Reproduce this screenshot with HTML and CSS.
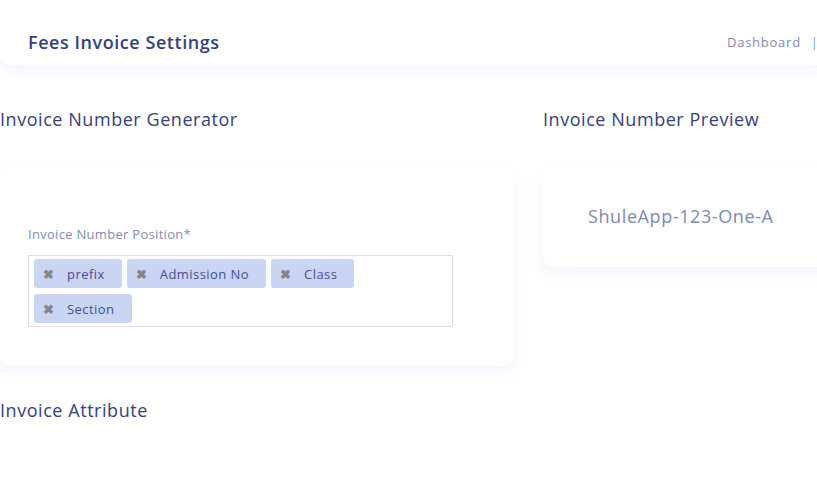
FILE: index.html
```html
<!DOCTYPE html>
<html>
<head>
<meta charset="utf-8">
<link rel="stylesheet" href="styles.css">
</head>
<body>
<header class="topbar">
  <h1 class="page-title">Fees Invoice Settings</h1>
  <nav class="crumbs"><a class="crumb">Dashboard</a><span class="sep">|</span></nav>
</header>
<main class="content">
  <section class="col-left">
    <h2 class="section-title">Invoice Number Generator</h2>
    <div class="card gen-card">
      <label class="field-label">Invoice Number Position*</label>
      <div class="tag-box">
        <span class="tag"><span class="tag-x">&#10006;</span>prefix</span>
        <span class="tag"><span class="tag-x">&#10006;</span>Admission No</span>
        <span class="tag"><span class="tag-x">&#10006;</span>Class</span>
        <span class="tag"><span class="tag-x">&#10006;</span>Section</span>
      </div>
    </div>
    <h2 class="section-title attr-title">Invoice Attribute</h2>
  </section>
  <section class="col-right">
    <h2 class="section-title">Invoice Number Preview</h2>
    <div class="card preview-card">
      <div class="preview-text">ShuleApp-123-One-A</div>
    </div>
  </section>
</main>
</body>
</html>
```
FILE: styles.css
```css
html, body {
  margin: 0;
  padding: 0;
  background: #ffffff;
  overflow: hidden;
  width: 817px;
  height: 494px;
  font-family: "Open Sans", "Noto Sans", sans-serif;
}
.topbar {
  height: 65px;
  background: #fff;
  border-radius: 0 0 10px 10px;
  box-shadow: 0 6px 14px rgba(190, 140, 240, 0.12);
  display: flex;
  align-items: flex-start;
  justify-content: space-between;
  padding: 30px 0 0 28px;
  width: 830px;
  box-sizing: border-box;
}
.page-title {
  margin: 0;
  font-size: 18px;
  line-height: 24px;
  font-weight: 600;
  color: #35417e;
  letter-spacing: 0.55px;
}
.crumbs {
  display: flex;
  align-items: center;
  gap: 10px;
  font-size: 13px;
  line-height: 24px;
  color: #828bb2;
  margin-right: 12px;
  letter-spacing: 0.75px;
}
.sep { color: #7c9be0; letter-spacing: 0; }
.content {
  display: flex;
  gap: 30px;
  margin-top: 40px;
  width: 860px;
}
.col-left { width: 513px; flex: none; }
.col-right { width: 300px; flex: none; }
.section-title {
  margin: 0;
  font-size: 18px;
  font-weight: 500;
  color: #35417e;
  line-height: 28px;
  height: 28px;
  letter-spacing: 0.55px;
}
.card {
  background: #fff;
  border-radius: 10px;
  box-shadow: 0 6px 16px rgba(190, 140, 240, 0.13);
  margin-top: 35px;
}
.gen-card {
  padding: 58px 60px 39px 28px;
  height: 198px;
  box-sizing: border-box;
}
.field-label {
  display: block;
  font-size: 13px;
  color: #828bb2;
  line-height: 16px;
  margin-bottom: 13px;
  letter-spacing: 0.3px;
}
.tag-box {
  border: 1px solid #dcdcec;
  padding: 3px 5px 3px 5px;
  display: flex;
  flex-wrap: wrap;
  align-content: flex-start;
  gap: 6px 5px;
  height: 72px;
  box-sizing: border-box;
  width: 425px;
}
.tag {
  display: flex;
  align-items: center;
  height: 29px;
  background: #cad5f3;
  border-radius: 3px;
  padding: 0 17px 0 9px;
  font-size: 13px;
  color: #415094;
  letter-spacing: 0.45px;
}
.tag-x {
  color: #858585;
  font-size: 13px;
  font-weight: 700;
  margin-right: 13px;
  width: 11px;
  letter-spacing: 0;
}
.attr-title { margin-top: 30px; }
.preview-card {
  height: 99px;
  display: flex;
  align-items: center;
  padding-left: 45px;
}
.preview-text {
  font-size: 18px;
  color: #7c89b8;
  letter-spacing: 0.6px;
  margin-top: -3px;
}
```
